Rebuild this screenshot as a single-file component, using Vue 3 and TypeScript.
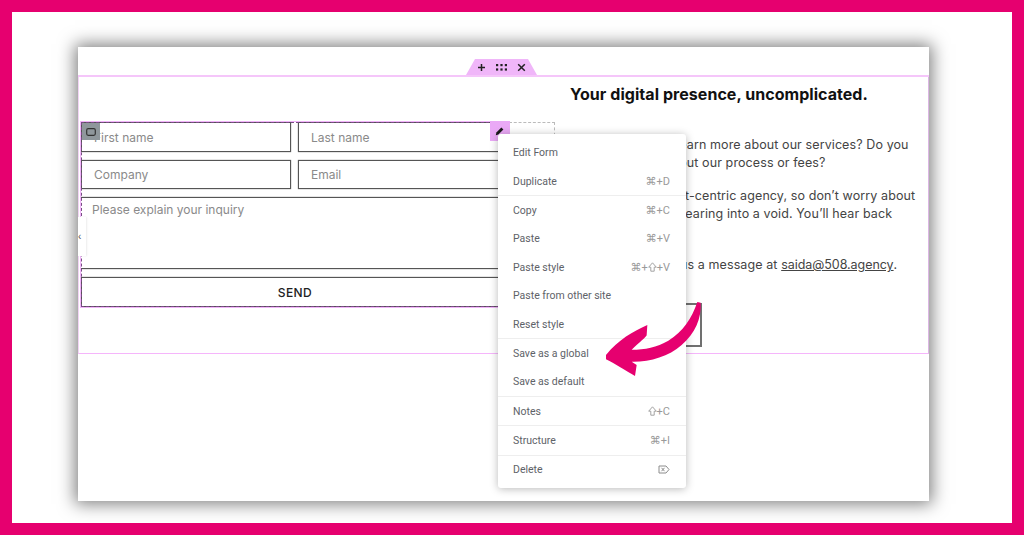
<script setup lang="ts">
interface MenuItem { label: string; keys?: string[]; icon?: 'delete' }
// "shift" in a key list is drawn as the outlined arrow, everything else as text.
const menuGroups: MenuItem[][] = [
  [{ label: 'Edit Form' }, { label: 'Duplicate', keys: ['⌘+D'] }],
  [
    { label: 'Copy', keys: ['⌘+C'] },
    { label: 'Paste', keys: ['⌘+V'] },
    { label: 'Paste style', keys: ['⌘+', 'shift', '+V'] },
    { label: 'Paste from other site' },
    { label: 'Reset style' },
  ],
  [{ label: 'Save as a global' }, { label: 'Save as default' }],
  [{ label: 'Notes', keys: ['shift', '+C'] }],
  [{ label: 'Structure', keys: ['⌘+I'] }],
  [{ label: 'Delete', icon: 'delete' }],
]
</script>

<template>
  <div class="frame">
    <div class="window">
      <div class="topbar">
        <div class="tab">
          <svg width="9" height="9" viewBox="0 0 9 9"><path d="M4.5 1v7M1 4.500h7" stroke="#222" stroke-width="1.500" fill="none" /></svg>
          <svg width="11" height="7" viewBox="0 0 11 7" fill="#222">
            <rect x="0" y="0" width="2.200" height="2.200" /><rect x="4.400" y="0" width="2.200" height="2.200" /><rect x="8.800" y="0" width="2.200" height="2.200" />
            <rect x="0" y="4.400" width="2.200" height="2.200" /><rect x="4.400" y="4.400" width="2.200" height="2.200" /><rect x="8.800" y="4.400" width="2.200" height="2.200" />
          </svg>
          <svg width="9" height="9" viewBox="0 0 9 9"><path d="M1.200 1.200l6.600 6.600M7.800 1.200l-6.600 6.600" stroke="#222" stroke-width="1.500" fill="none" /></svg>
        </div>
      </div>

      <section class="section">
        <div class="form-col">
          <form class="form">
            <input class="field" placeholder="First name" />
            <input class="field" placeholder="Last name" />
            <input class="field" placeholder="Company" />
            <input class="field" placeholder="Email" />
            <textarea class="field area" placeholder="Please explain your inquiry"></textarea>
            <button class="send" type="button">SEND</button>
            <span class="handle">
              <svg width="10" height="8" viewBox="0 0 10 8"><rect x="0.700" y="0.700" width="8.600" height="6.600" rx="1.500" fill="none" stroke="#333" stroke-width="1.200" /></svg>
            </span>
            <span class="pencil">
              <svg width="10" height="10" viewBox="0 0 10 10"><path d="M0.800 9.200l0.600-2.600 5-5 2 2-5 5z" fill="#1a1a1a" /></svg>
            </span>
            <span class="ghost"></span>
          </form>
          <span class="collapse">‹</span>
        </div>

        <div class="copy">
          <h2 class="title">Your digital presence, uncomplicated.</h2>
          <p>Would you like to learn more about our services? Do you<br />have questions about our process or fees?</p>
          <p>We are a truly client-centric agency, so don’t worry about<br />your inquiry disappearing into a void. You’ll hear back<br />from us soon.</p>
          <p>You can just send us a message at <a class="mail">saida@508.agency</a>.</p>
          <button class="cta" type="button">Contact</button>
        </div>
      </section>

      <div class="menu">
        <div v-for="(group, g) in menuGroups" :key="g" class="group">
          <div v-for="item in group" :key="item.label" class="item">
            <span>{{ item.label }}</span>
            <span v-if="item.keys" class="keys">
              <template v-for="part in item.keys" :key="part">
                <svg v-if="part === 'shift'" class="shift" width="9" height="10" viewBox="0 0 9 10" fill="none" stroke="#9a9a9a" stroke-width="0.900">
                  <path d="M4.500 0.800L8.300 5.200H6.200V9.200H2.800V5.200H0.700Z" />
                </svg>
                <template v-else>{{ part }}</template>
              </template>
            </span>
            <svg v-if="item.icon" width="12" height="9" viewBox="0 0 12 9" fill="none" stroke="#8c8c8c" stroke-width="1">
              <path d="M1 1h7l3 3.500-3 3.500h-7z" /><path d="M3.500 2.800l3 3.400M6.500 2.800l-3 3.400" />
            </svg>
          </div>
        </div>
      </div>

      <svg class="arrow" width="240" height="200" viewBox="0 0 720 600">
        <path d="M622 6C605 55 580 95 535 122C500 142 465 149 425 149C445 130 472 108 470 105L472 75C430 95 385 118 348 165L348 178C375 190 410 215 435 228L440 195L425 185C480 186 535 170 575 135C615 100 635 55 632 8Z" fill="#e6006f" />
      </svg>
    </div>
  </div>
</template>

<style>
html, body { margin: 0; background: #fff; }
</style>

<style scoped>
.frame {
  width: 1024px;
  height: 535px;
  box-sizing: border-box;
  border: 12px solid #e6006f;
  padding: 35px 83px 0 66px;
  background: #fff;
  overflow: hidden;
  font-family: Inter, "Liberation Sans", sans-serif;
}
.window {
  position: relative;
  width: 851px;
  height: 454px;
  background: #fff;
  box-shadow: 0 0 16px 3px rgba(0, 0, 0, 0.5);
}
.topbar {
  position: relative;
  height: 28px;
  display: flex;
  justify-content: center;
  align-items: flex-end;
  padding-right: 4px;
  border-bottom: 2px solid #f5c6fa;
}
.tab {
  width: 71px;
  height: 16px;
  display: flex;
  align-items: center;
  justify-content: center;
  gap: 10px;
  background: #f0b6f9;
  clip-path: polygon(9px 0, 62px 0, 71px 100%, 0 100%);
}
.section {
  display: flex;
  height: 276px;
  border-bottom: 1px solid #f5b5fb;
  border-left: 1px solid #f2d4f5;
  border-right: 1px solid #dcb6e4;
  padding-left: 2px;
}
.form-col { width: 428px; padding-top: 45px; flex: none; }
.form {
  position: relative;
  display: grid;
  grid-template-columns: 210px 211px;
  grid-template-rows: 30px 29px 72px 30px;
  gap: 8px 7px;
  outline: 1px solid #f0b6f9;
}
.form::after {
  content: "";
  position: absolute;
  inset: 0;
  border: 1px dashed #7a4a85;
  pointer-events: none;
}
.field {
  box-sizing: border-box;
  width: 100%;
  height: 100%;
  margin: 0;
  padding: 0 12px;
  border: 1px solid #555;
  box-shadow: 0 0 1px rgba(0, 0, 0, 0.6);
  border-radius: 0;
  background: #fff;
  outline: none;
  font: 12px Inter, "Liberation Sans", sans-serif;
  color: #666;
}
.field::placeholder { color: #8a8a8a; opacity: 1; }
.area {
  grid-column: 1 / -1;
  padding: 4px 11px;
  resize: none;
  border-left: 0;
}
.send {
  grid-column: 1 / -1;
  border: 1px solid #555;
  box-shadow: 0 0 1px rgba(0, 0, 0, 0.6);
  background: #fff;
  font: 500 12px Inter, "Liberation Sans", sans-serif;
  letter-spacing: 0.4px;
  color: #222;
  padding: 0;
}
.handle {
  position: absolute;
  left: 1px;
  top: 1px;
  width: 18px;
  height: 17px;
  background: #8f979c;
  display: flex;
  align-items: center;
  justify-content: center;
  z-index: 2;
}
.pencil {
  position: absolute;
  right: -1px;
  top: -1px;
  width: 20px;
  height: 20px;
  background: #eaa9f6;
  display: flex;
  align-items: center;
  justify-content: center;
  z-index: 2;
}
.ghost {
  position: absolute;
  left: 100%;
  top: 0;
  width: 46px;
  height: 30px;
  box-sizing: border-box;
  border: 1px dashed #bbb;
  border-left: 0;
}
.collapse {
  position: absolute;
  left: 0;
  top: 170px;
  width: 8px;
  height: 39px;
  background: #fff;
  box-shadow: 1px 0 2px rgba(0, 0, 0, 0.08);
  color: #555;
  font: 10px/39px "Liberation Sans", sans-serif;
  z-index: 3;
}
.copy {
  margin-left: 61px;
  flex: none;
  width: 350px;
  color: #444;
  font-size: 12.5px;
  letter-spacing: 0.1px;
  line-height: 18px;
}
.title {
  margin: 7px 0 32px;
  font-size: 16px;
  line-height: 20px;
  font-weight: 700;
  letter-spacing: 0.05px;
  color: #111;
  white-space: nowrap;
}
.copy p { margin: 0 0 15px; white-space: nowrap; }
.mail { text-decoration: underline; letter-spacing: -0.05px; }
.cta {
  display: block;
  width: 132px;
  height: 44px;
  margin-top: 29px;
  background: #fff;
  border: 2px solid #707070;
  font: 500 13px Inter, "Liberation Sans", sans-serif;
}
.menu {
  position: absolute;
  left: 420px;
  top: 87px;
  width: 188px;
  height: 354px;
  box-sizing: border-box;
  padding: 4.5px 0;
  background: #fff;
  border-radius: 3px;
  box-shadow: 0 1px 8px rgba(0, 0, 0, 0.28);
  font: 10.5px Roboto, "Liberation Sans", sans-serif;
  color: #5e6268;
  z-index: 5;
}
.group + .group { border-top: 1px solid #eee; }
.item {
  height: 28.4px;
  display: flex;
  align-items: center;
  justify-content: space-between;
  padding: 0 16px 0 15px;
}
.keys {
  display: flex;
  align-items: center;
  color: #9a9a9a;
  font-size: 11px;
  font-family: Roboto, "DejaVu Sans", sans-serif;
}
.shift { flex: none; }
.arrow {
  position: absolute;
  left: 412px;
  top: 253px;
  z-index: 6;
}
</style>
